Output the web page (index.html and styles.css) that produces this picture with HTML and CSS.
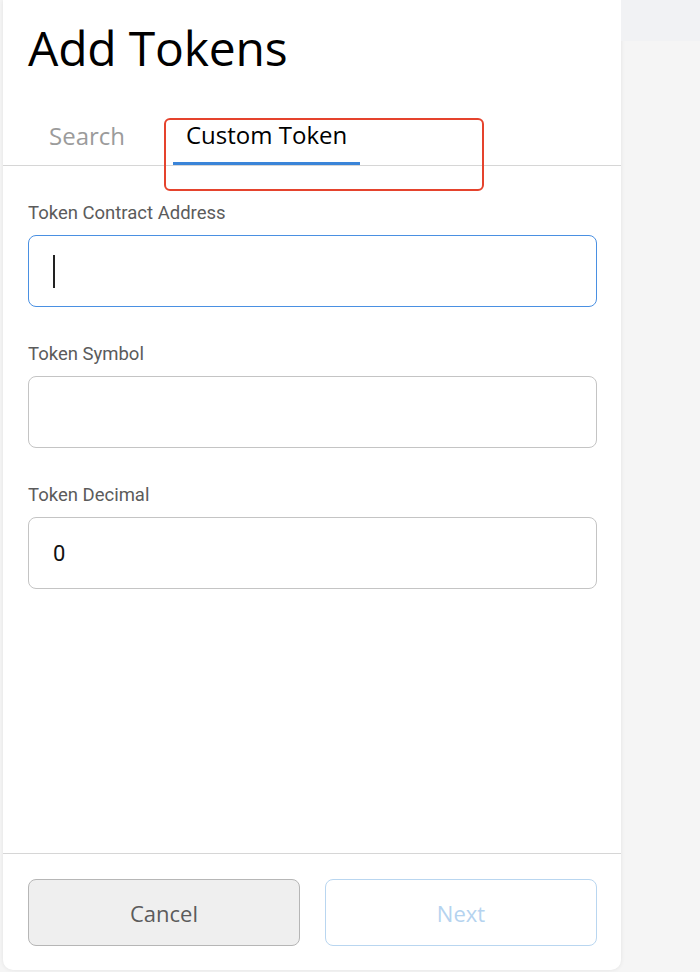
FILE: index.html
```html
<!DOCTYPE html>
<html>
<head>
<meta charset="utf-8">
<link rel="stylesheet" href="styles.css">
</head>
<body>
<div class="page">
  <div class="card">
    <h1 class="title">Add Tokens</h1>
    <div class="tabs">
      <div class="tab">Search</div>
      <div class="tab active">Custom Token</div>
      <div class="annot"></div>
    </div>
    <div class="form">
      <div class="field">
        <div class="label">Token Contract Address</div>
        <div class="input focused"><span class="caret"></span></div>
      </div>
      <div class="field">
        <div class="label">Token Symbol</div>
        <div class="input"></div>
      </div>
      <div class="field">
        <div class="label">Token Decimal</div>
        <div class="input"><span class="value">0</span></div>
      </div>
    </div>
    <div class="footer">
      <button class="btn cancel">Cancel</button>
      <button class="btn next">Next</button>
    </div>
  </div>
  <div class="side">
    <div class="side-top"></div>
  </div>
</div>
</body>
</html>
```
FILE: styles.css
```css
html, body {
  margin: 0;
  padding: 0;
}
body {
  background: #f5f5f5;
  font-family: Roboto, "Liberation Sans", sans-serif;
}
.page {
  display: flex;
  height: 972px;
  overflow: hidden;
}
.card {
  width: 618px;
  height: 970px;
  margin-left: 3px;
  background: #fff;
  border-radius: 0 0 10px 10px;
  box-shadow: 0 0 4px rgba(0, 0, 0, 0.08);
  display: flex;
  flex-direction: column;
  flex-shrink: 0;
}
.side {
  flex: 1;
}
.side-top {
  height: 41px;
  background: #f1f2f4;
}
.title {
  margin: 0;
  padding: 16px 0 0 25px;
  height: 84px;
  box-sizing: border-box;
  font-family: "Open Sans", "Noto Sans", sans-serif;
  font-weight: 400;
  font-size: 48px;
  line-height: 64px;
  letter-spacing: -0.2px;
  color: #000;
}
.tabs {
  position: relative;
  display: flex;
  gap: 35px;
  padding-left: 33px;
  border-bottom: 1px solid #d6d6d6;
  height: 82px;
  box-sizing: border-box;
}
.tab {
  font-family: "Open Sans", "Noto Sans", sans-serif;
  font-size: 24px;
  line-height: 32px;
  color: #9b9b9b;
  padding: 36px 13px 0;
  box-sizing: border-box;
}
.tab.active {
  color: #000;
  border-bottom: 3px solid #3a84d8;
  padding-top: 35px;
}
.annot {
  position: absolute;
  left: 161px;
  top: 34px;
  width: 320px;
  height: 73px;
  box-sizing: border-box;
  border: 2.5px solid #e5432d;
  border-radius: 6px;
}
.form {
  flex: 1;
  padding: 36px 24px 0 25px;
  display: flex;
  flex-direction: column;
  gap: 36px;
}
.field {
  display: flex;
  flex-direction: column;
  gap: 11px;
}
.label {
  font-size: 18.5px;
  line-height: 22px;
  color: #5b5b5b;
}
.input {
  height: 72px;
  box-sizing: border-box;
  border: 1px solid #c4c4c4;
  border-radius: 8px;
  display: flex;
  align-items: center;
  padding-left: 24px;
}
.input.focused {
  border-color: #4a90e2;
}
.caret {
  width: 2px;
  height: 33px;
  background: #222;
}
.value {
  font-size: 22px;
  color: #111;
}
.footer {
  border-top: 1px solid #d6d6d6;
  display: flex;
  gap: 25px;
  padding: 25px 24px 24px 25px;
}
.btn {
  flex: 1;
  height: 67px;
  border-radius: 8px;
  font-family: "Open Sans", "Noto Sans", sans-serif;
  font-size: 22px;
  cursor: pointer;
}
.btn.cancel {
  background: #efefef;
  border: 1px solid #b6b6b6;
  color: #5b5b5b;
}
.btn.next {
  background: #fff;
  border: 1px solid #b9d6f0;
  color: #b5d3ef;
}
```
